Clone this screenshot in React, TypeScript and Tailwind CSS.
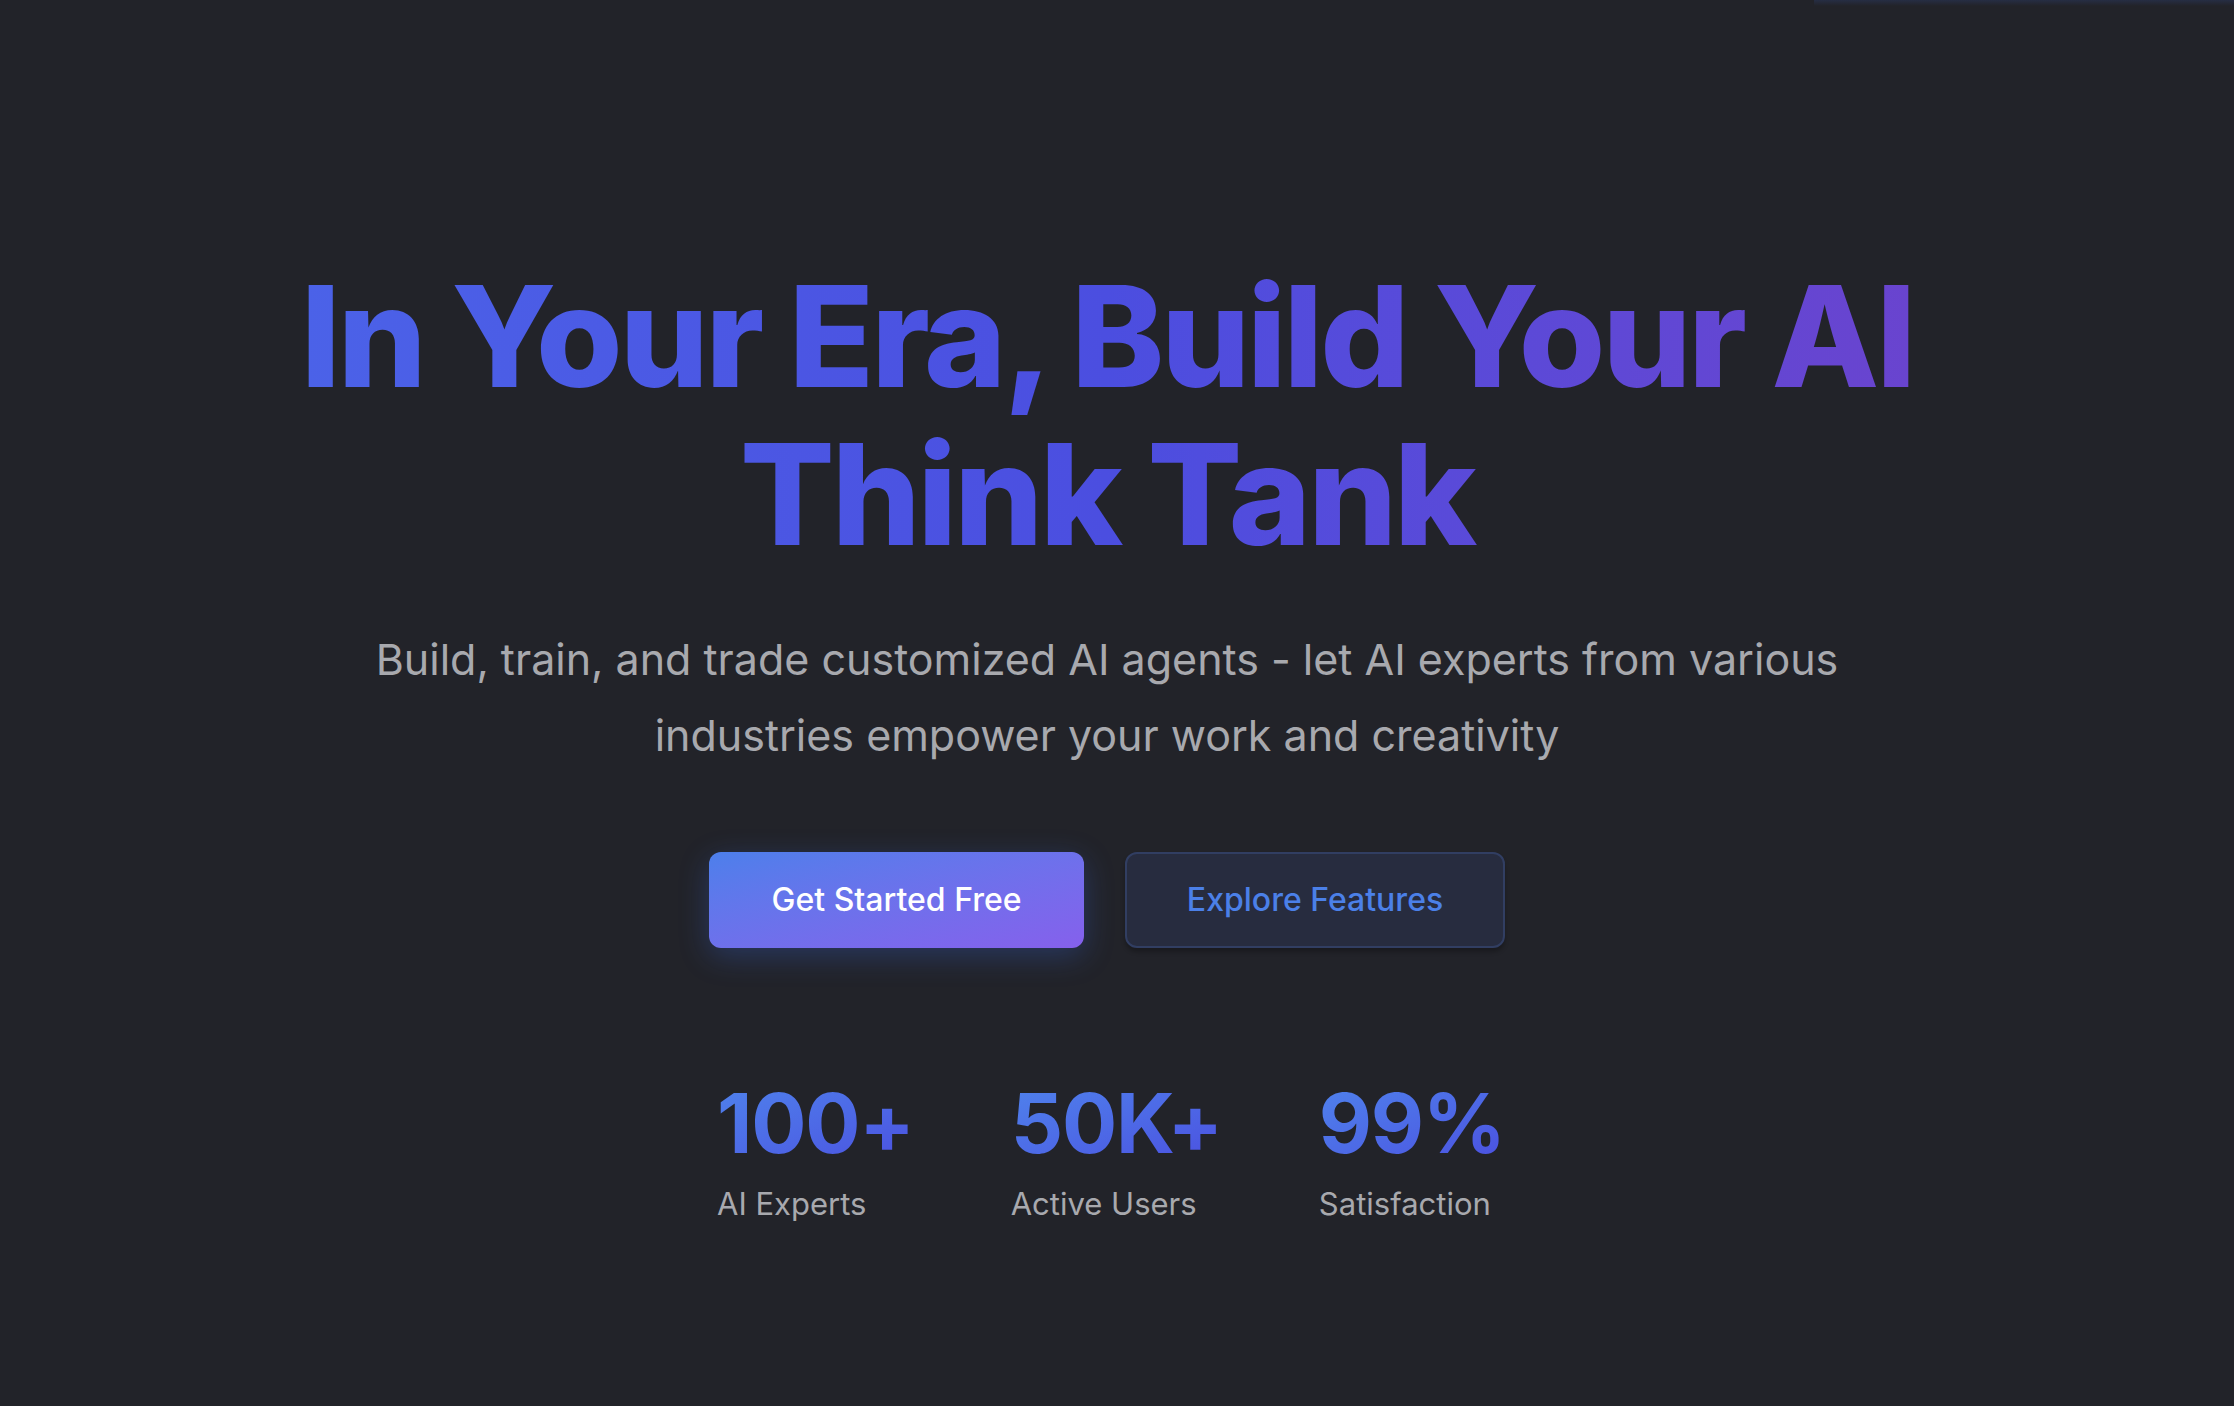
import React from "react";

const stats = [
  { value: "100+", label: "AI Experts" },
  { value: "50K+", label: "Active Users" },
  { value: "99%", label: "Satisfaction" },
];

export default function App() {
  return (
    <div
      className="relative min-h-[1406px] w-full overflow-hidden bg-[#222329] text-white"
      style={{ fontFamily: "Inter, 'Noto Sans', sans-serif" }}
    >
      <div className="pointer-events-none absolute right-0 top-0 h-[6px] w-[420px] bg-gradient-to-b from-[#27304a] to-transparent opacity-80" />
      <main className="flex flex-col items-center pr-[20px] pt-[257px]">
        <h1 className="bg-gradient-to-r from-[#4b62e8] via-[#4b4ee0] to-[#6944cf] bg-clip-text text-center text-[140px] font-extrabold leading-[158px] tracking-[-0.022em] text-transparent">
          In Your Era, Build Your AI
          <br />
          Think Tank
        </h1>
        <p className="mt-[48px] max-w-[1500px] text-center text-[43px] font-normal leading-[76px] text-[#a8a9ae]">
          Build, train, and trade customized AI agents - let AI experts from various industries empower your work and creativity
        </p>
        <div className="mt-[79px] flex items-center gap-[41px]">
          <button className="flex h-[96px] w-[375px] items-center justify-center rounded-[12px] bg-gradient-to-br from-[#4c7feb] to-[#8560ec] text-[32px] font-medium text-white shadow-[0_8px_30px_rgba(59,110,240,0.28)]">
            Get Started Free
          </button>
          <button className="flex h-[96px] w-[380px] items-center justify-center rounded-[12px] border-2 border-[#313e62] bg-[#272c3f] text-[32px] font-medium text-[#4b80e8] shadow-[0_4px_4px_rgba(0,0,0,0.25)]">
            Explore Features
          </button>
        </div>
        <div className="ml-[8px] mt-[135px] flex items-start gap-[97px]">
          {stats.map((s) => (
            <div key={s.label} className="flex flex-col items-start">
              <div className="bg-gradient-to-br from-[#4f82ec] to-[#4b4fe0] bg-clip-text text-[82px] font-bold leading-[82px] tracking-[-0.015em] text-transparent">
                {s.value}
              </div>
              <div className="mt-[21px] text-[31px] leading-[36px] text-[#a8a9ae]">{s.label}</div>
            </div>
          ))}
        </div>
      </main>
    </div>
  );
}
